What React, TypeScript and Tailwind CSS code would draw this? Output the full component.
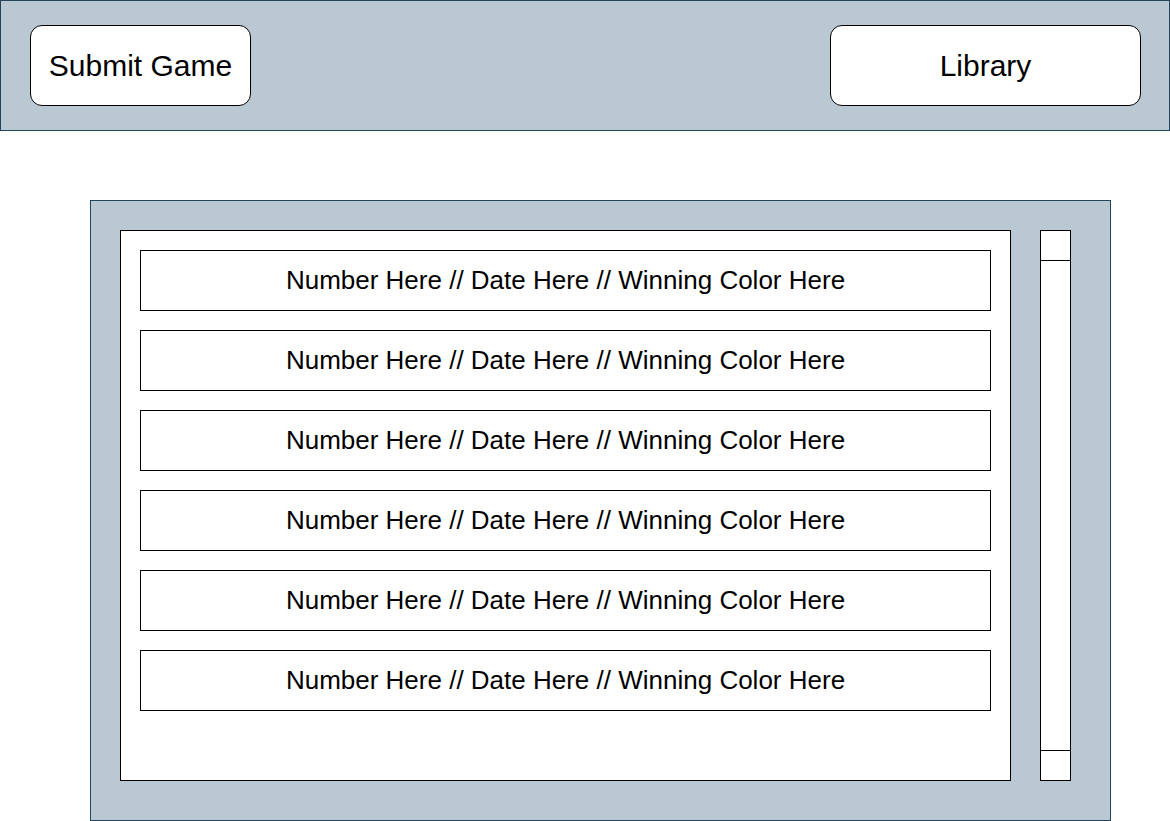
export default function App() {
  const rows = Array.from({ length: 6 });

  return (
    <div className="min-h-screen bg-white text-black" style={{ fontFamily: '"Liberation Sans", Arial, sans-serif' }}>
      <header className="flex h-[131px] items-start justify-between border border-[#23445d] bg-[#bac8d3] pl-[29px] pr-[28px] pt-[24px]">
        <button className="flex h-[81px] w-[221px] items-center justify-center rounded-[12px] border border-black bg-white text-[30px]">
          Submit Game
        </button>
        <button className="flex h-[81px] w-[311px] items-center justify-center rounded-[12px] border border-black bg-white text-[30px]">
          Library
        </button>
      </header>

      <main className="ml-[90px] mt-[69px] flex h-[621px] w-[1021px] items-start gap-[29px] border border-[#23445d] bg-[#bac8d3] p-[29px]">
        <section className="flex h-[551px] w-[891px] flex-col gap-[19px] border border-black bg-white p-[19px]">
          {rows.map((_, i) => (
            <div
              key={i}
              className="flex h-[61px] w-[851px] shrink-0 items-center justify-center border border-black text-[26px]"
            >
              Number Here // Date Here // Winning Color Here
            </div>
          ))}
        </section>

        <div className="flex h-[551px] w-[31px] flex-col border border-black bg-white">
          <div className="h-[30px] border-b border-black" />
          <div className="flex-1" />
          <div className="h-[30px] border-t border-black" />
        </div>
      </main>
    </div>
  );
}
